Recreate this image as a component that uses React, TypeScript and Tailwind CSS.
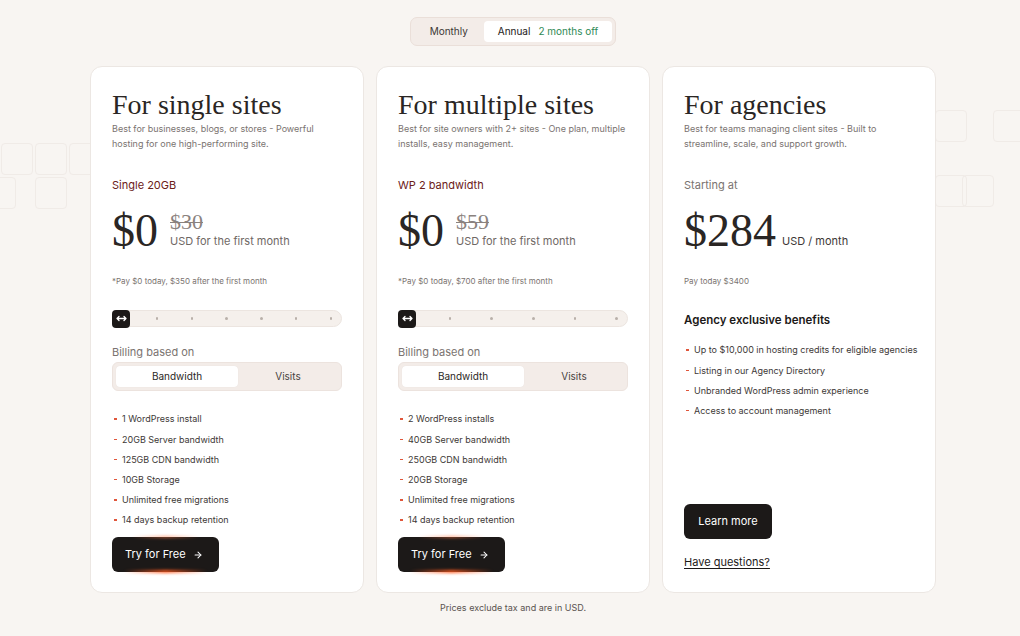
import React from "react";
import { ArrowRight } from "lucide-react";

const serif = { fontFamily: '"Liberation Serif", "Times New Roman", serif' };

function Bullet({ children }: { children: React.ReactNode }) {
  return (
    <li className="flex items-center h-[20.2px] whitespace-nowrap">
      <span className="w-[3px] h-[1.5px] bg-[#e0563b] ml-[2px] mr-[5px] shrink-0" />
      <span>{children}</span>
    </li>
  );
}

function Thumb() {
  return (
    <div className="relative w-[18px] h-[18px] rounded-[4px] bg-[#1c1918] flex items-center justify-center shrink-0 -ml-[1px]">
      <svg width="11" height="7" viewBox="0 0 11 7" fill="none" stroke="white" strokeWidth="1.3" strokeLinecap="round" strokeLinejoin="round">
        <path d="M1 3.5h9M3 1.5L1 3.5l2 2M8 1.5l2 2-2 2" />
      </svg>
    </div>
  );
}

function Slider({ dots }: { dots: number }) {
  return (
    <div className="relative mt-[23px] h-[17px] rounded-full bg-[#f5f0ec] border border-[#ece5e0] flex items-center">
      <div className="absolute inset-y-0 left-[8px] right-[9px] flex justify-between items-center">
        <span className="w-[2.5px] h-[2.5px]" />
        {Array.from({ length: dots }).map((_, i) => (
          <span key={i} className="w-[2.5px] h-[2.5px] rounded-full bg-[#b9b0aa]" />
        ))}
      </div>
      <Thumb />
    </div>
  );
}

function Segment() {
  return (
    <div className="mt-[2px] h-[29px] rounded-[6px] bg-[#f3ece8] border border-[#ece3de] flex items-center p-[3px] text-[10px] text-[#2b2725]">
      <div className="w-[122px] h-[21px] bg-white rounded-[4px] flex items-center justify-center shadow-[0_0_1px_rgba(0,0,0,0.08)]">Bandwidth</div>
      <div className="flex-1 flex items-center justify-center text-[#4a4442]">Visits</div>
    </div>
  );
}

function TryButton() {
  return (
    <button className="relative mt-[7px] w-[107px] h-[35px] rounded-[6px] bg-[#1c1918] text-white text-[11px] flex items-center pl-[13px] gap-[7px]">
      <span className="absolute left-[12px] right-[12px] -bottom-[1px] h-[3px] rounded-full bg-gradient-to-r from-transparent via-[#ff5a1f] to-transparent blur-[1.5px]" />
      <span className="absolute left-[20px] right-[20px] -top-[1px] h-[2px] rounded-full bg-gradient-to-r from-transparent via-[#ff7a45] to-transparent blur-[1.5px] opacity-70" />
      <span className="relative">Try for Free</span>
      <ArrowRight size={10} strokeWidth={2.5} className="relative" />
    </button>
  );
}

function PlanCard(props: {
  title: string;
  desc: string[];
  label: string;
  old: string;
  note: string;
  dots: number;
  features: string[];
}) {
  return (
    <div className="w-[274px] bg-white rounded-[12px] border border-[#ece7e3] px-[21px] pt-[23px] pb-[20px] flex flex-col">
      <h2 style={serif} className="text-[28px] leading-[30px] text-[#2a2624]">{props.title}</h2>
      <p className="text-[9px] leading-[15px] text-[#7a7370] mt-[1px]">
        {props.desc[0]}
        <br />
        {props.desc[1]}
      </p>
      <div className="mt-[26px] text-[11px] leading-[16px] text-[#6b2018]">{props.label}</div>
      <div className="mt-[15px] flex items-start">
        <span style={serif} className="text-[46px] leading-[46px] text-[#2a2624]">$0</span>
        <div className="ml-[12px] flex flex-col pt-[3px]">
          <span style={serif} className="text-[22px] leading-[22px] text-[#8a827e] line-through decoration-[1px]">{props.old}</span>
          <span className="text-[11px] leading-[16px] text-[#6f6865]">USD for the first month</span>
        </div>
      </div>
      <div className="mt-[21px] text-[8px] leading-[12px] text-[#7a7370]">{props.note}</div>
      <Slider dots={props.dots} />
      <div className="mt-[17px] text-[11px] leading-[16px] text-[#7a7370]">Billing based on</div>
      <Segment />
      <ul className="mt-[18px] text-[9px] text-[#3d3836]">
        {props.features.map((f) => (
          <Bullet key={f}>{f}</Bullet>
        ))}
      </ul>
      <TryButton />
    </div>
  );
}

function AgencyCard() {
  return (
    <div className="w-[274px] bg-white rounded-[12px] border border-[#ece7e3] px-[21px] pt-[23px] pb-[22px] flex flex-col">
      <h2 style={serif} className="text-[28px] leading-[30px] text-[#2a2624]">For agencies</h2>
      <p className="text-[9px] leading-[15px] text-[#7a7370] mt-[1px]">
        Best for teams managing client sites - Built to
        <br />
        streamline, scale, and support growth.
      </p>
      <div className="mt-[26px] text-[11px] leading-[16px] text-[#7a7370]">Starting at</div>
      <div className="mt-[15px] flex items-end">
        <span style={serif} className="text-[46px] leading-[46px] text-[#2a2624]">$284</span>
        <span className="ml-[6px] mb-[5px] text-[11px] leading-[16px] text-[#3d3836]">USD / month</span>
      </div>
      <div className="mt-[21px] text-[8px] leading-[12px] text-[#7a7370]">Pay today $3400</div>
      <div className="mt-[25px] text-[11.5px] leading-[16px] font-semibold text-[#1c1918]">Agency exclusive benefits</div>
      <ul className="mt-[12px] text-[9px] text-[#3d3836]">
        <Bullet>Up to $10,000 in hosting credits for eligible agencies</Bullet>
        <Bullet>Listing in our Agency Directory</Bullet>
        <Bullet>Unbranded WordPress admin experience</Bullet>
        <Bullet>Access to account management</Bullet>
      </ul>
      <div className="mt-auto">
        <button className="w-[88px] h-[35px] rounded-[6px] bg-[#1c1918] text-white text-[11px] flex items-center justify-center">
          Learn more
        </button>
        <div className="mt-[15px] text-[11px] leading-[16px] text-[#1c1918] underline underline-offset-2">Have questions?</div>
      </div>
    </div>
  );
}

const squares = [
  "left-[1px] top-[143px]",
  "left-[35px] top-[143px]",
  "left-[69px] top-[143px]",
  "left-[-16px] top-[177px]",
  "left-[35px] top-[177px]",
  "left-[935px] top-[110px]",
  "left-[993px] top-[110px]",
  "left-[935px] top-[175px]",
  "left-[962px] top-[175px]",
];

export default function App() {
  return (
    <div
      className="relative w-[1020px] h-[636px] overflow-hidden bg-[#f8f5f2] flex flex-col items-center"
      style={{ fontFamily: 'Inter, "Noto Sans", sans-serif' }}
    >
      {squares.map((s) => (
        <div key={s} className={`absolute w-[32px] h-[32px] rounded-[4px] border border-[#f0ebe7] ${s}`} />
      ))}
      <div className="relative mt-[17px] ml-[6px] h-[29px] rounded-[7px] bg-[#f3ece8] border border-[#eadfd9] flex items-center p-[3px] text-[10px]">
        <div className="w-[70px] text-center text-[#3d3836]">Monthly</div>
        <div className="h-[21px] bg-white rounded-[4px] flex items-center px-[14px] gap-[8px]">
          <span className="text-[#1c1918]">Annual</span>
          <span className="text-[#2f8a55]">2 months off</span>
        </div>
      </div>
      <div className="relative mt-[20px] ml-[6px] flex gap-[12px] items-stretch">
        <PlanCard
          title="For single sites"
          desc={["Best for businesses, blogs, or stores - Powerful", "hosting for one high-performing site."]}
          label="Single 20GB"
          old="$30"
          note="*Pay $0 today, $350 after the first month"
          dots={6}
          features={[
            "1 WordPress install",
            "20GB Server bandwidth",
            "125GB CDN bandwidth",
            "10GB Storage",
            "Unlimited free migrations",
            "14 days backup retention",
          ]}
        />
        <PlanCard
          title="For multiple sites"
          desc={["Best for site owners with 2+ sites - One plan, multiple", "installs, easy management."]}
          label="WP 2 bandwidth"
          old="$59"
          note="*Pay $0 today, $700 after the first month"
          dots={5}
          features={[
            "2 WordPress installs",
            "40GB Server bandwidth",
            "250GB CDN bandwidth",
            "20GB Storage",
            "Unlimited free migrations",
            "14 days backup retention",
          ]}
        />
        <AgencyCard />
      </div>
      <div className="relative mt-[8px] ml-[6px] text-[9px] text-[#5a5350]">Prices exclude tax and are in USD.</div>
    </div>
  );
}
